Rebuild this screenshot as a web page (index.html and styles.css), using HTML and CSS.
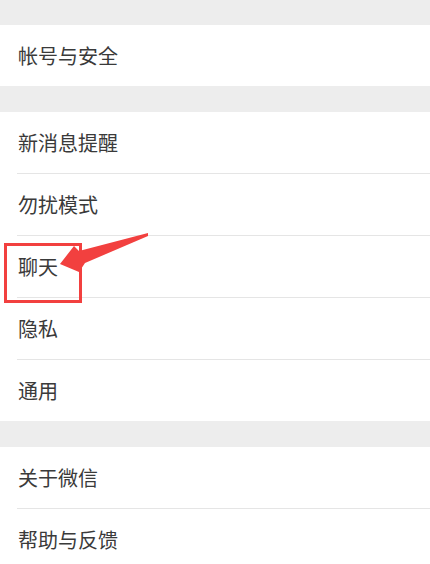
FILE: index.html
```html
<!DOCTYPE html>
<html lang="zh-CN">
<head>
    <meta charset="UTF-8">
    <meta name="viewport" content="width=device-width, initial-scale=1.0">
    <title>设置</title>
    <link rel="stylesheet" href="styles.css">
</head>
<body>
<div class="page">
    <div class="section">
        <div class="row">帐号与安全</div>
    </div>

    <div class="section">
        <div class="row">新消息提醒</div>
        <div class="row">勿扰模式</div>
        <div class="row">聊天</div>
        <div class="row">隐私</div>
        <div class="row">通用</div>
    </div>

    <div class="section">
        <div class="row">关于微信</div>
        <div class="row">帮助与反馈</div>
    </div>

    <!-- annotation drawn over the screenshot -->
    <div class="mark-box"></div>
    <svg class="mark-arrow" width="430" height="564" viewBox="0 0 430 564">
        <polygon points="60,264 74,246 79,251 148,233 148,236 85,263 79,272" fill="#f2403f"/>
    </svg>
</div>
</body>
</html>
```

FILE: styles.css
```css
body {
    margin: 0;
    background-color: #ededed;
    font-family: "Noto Sans CJK SC", "Noto Sans", sans-serif;
}
.page {
    position: relative;
    display: flex;
    flex-direction: column;
    gap: 26px;
    padding-top: 25px;
    border-top: 1px solid #e2e2e2;
    margin-top: -1px;
    min-height: 564px;
}
.section {
    background-color: #fff;
}
.row {
    height: 61px;
    display: flex;
    align-items: center;
    padding-left: 18px;
    font-size: 20px;
    color: #3a3a3a;
}
.row + .row {
    border-top: 1px solid #e5e5e5;
    margin-left: 17px;
    padding-left: 1px;
}
.mark-box {
    position: absolute;
    left: 4px;
    top: 243px;
    width: 72px;
    height: 54px;
    border: 3px solid #f2403f;
}
.mark-arrow {
    position: absolute;
    left: 0;
    top: 0;
    pointer-events: none;
}
```
